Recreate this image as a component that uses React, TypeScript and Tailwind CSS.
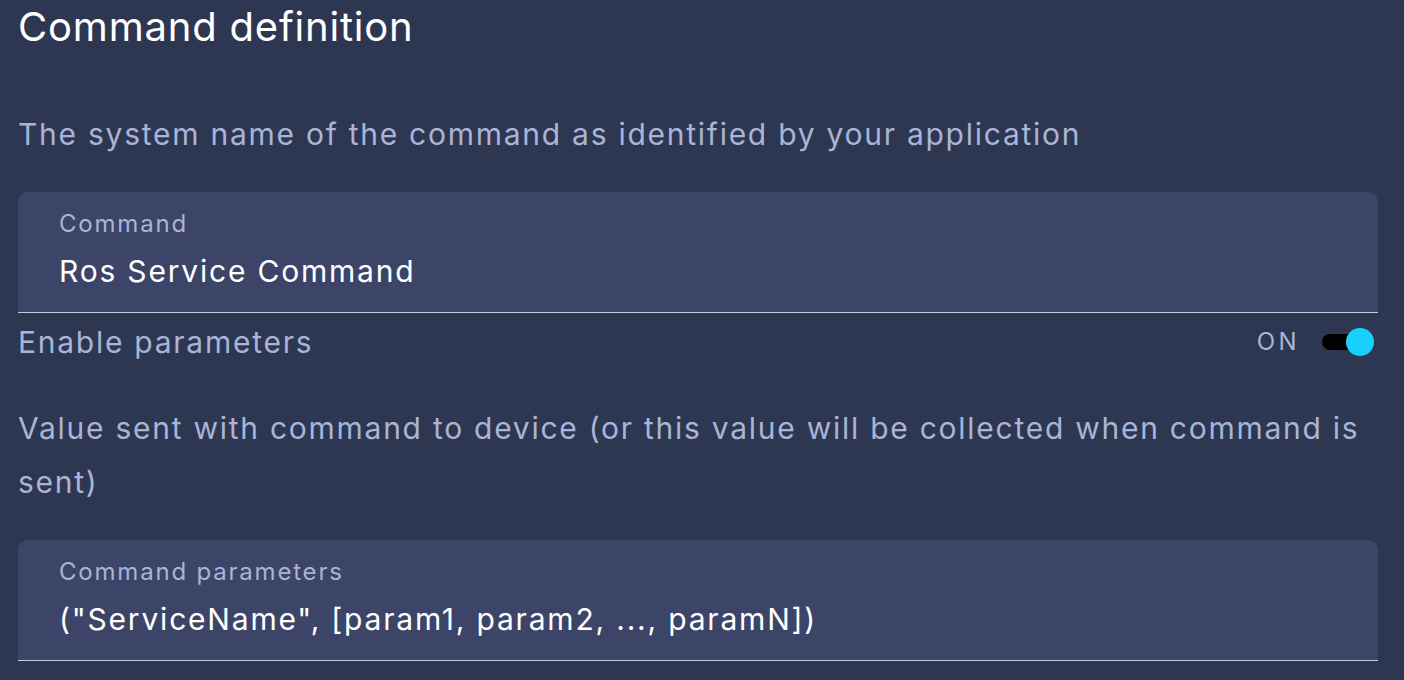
import { useState } from "react";

function Field({ label, value }: { label: string; value: string }) {
  return (
    <div className="h-[121px] rounded-t-[10px] bg-[#3c4567] border-b border-[#c3cbe6] px-[41px] pt-[16px]">
      <div className="text-[24px] leading-[32px] tracking-[0.075em] text-[#a9b4d6]">{label}</div>
      <div className="mt-[15px] text-[30px] leading-[32px] tracking-[0.06em] text-white">{value}</div>
    </div>
  );
}

export default function App() {
  const [on, setOn] = useState(true);

  return (
    <div
      className="min-h-screen w-full bg-[#2e3752] pl-[18px] pr-[26px] overflow-hidden"
      style={{ fontFamily: "Inter, 'Noto Sans', sans-serif" }}
    >
      {/* Title */}
      <h1 className="text-[40px] leading-[54px] tracking-[0.02em] text-white">Command definition</h1>

      <p className="mt-[53px] text-[30px] leading-[54px] tracking-[0.058em] text-[#a9b4d6]">
        The system name of the command as identified by your application
      </p>

      <div className="mt-[31px]">
        <Field label="Command" value="Ros Service Command" />
      </div>

      {/* Enable parameters row */}
      <div className="flex h-[58px] items-center justify-between">
        <span className="text-[30px] tracking-[0.058em] text-[#a9b4d6]">Enable parameters</span>
        <button onClick={() => setOn(!on)} className="flex items-center gap-[22px] pr-[18px]">
          <span className="text-[24px] tracking-[0.14em] text-[#a9b4d6]">{on ? "ON" : "OFF"}</span>
          <span className="relative block h-[16px] w-[38px] rounded-full bg-black">
            <span
              className={`absolute top-1/2 h-[28px] w-[28px] -translate-y-1/2 rounded-full bg-[#17d0fc] ${
                on ? "right-[-14px]" : "left-[-4px]"
              }`}
            />
          </span>
        </button>
      </div>

      <p className="mt-[30px] text-[30px] leading-[54px] tracking-[0.058em] text-[#a9b4d6]">
        Value sent with command to device (or this value will be collected when command is sent)
      </p>

      <div className="mt-[31px]">
        <Field label="Command parameters" value={'("ServiceName", [param1, param2, ..., paramN])'} />
      </div>
    </div>
  );
}
